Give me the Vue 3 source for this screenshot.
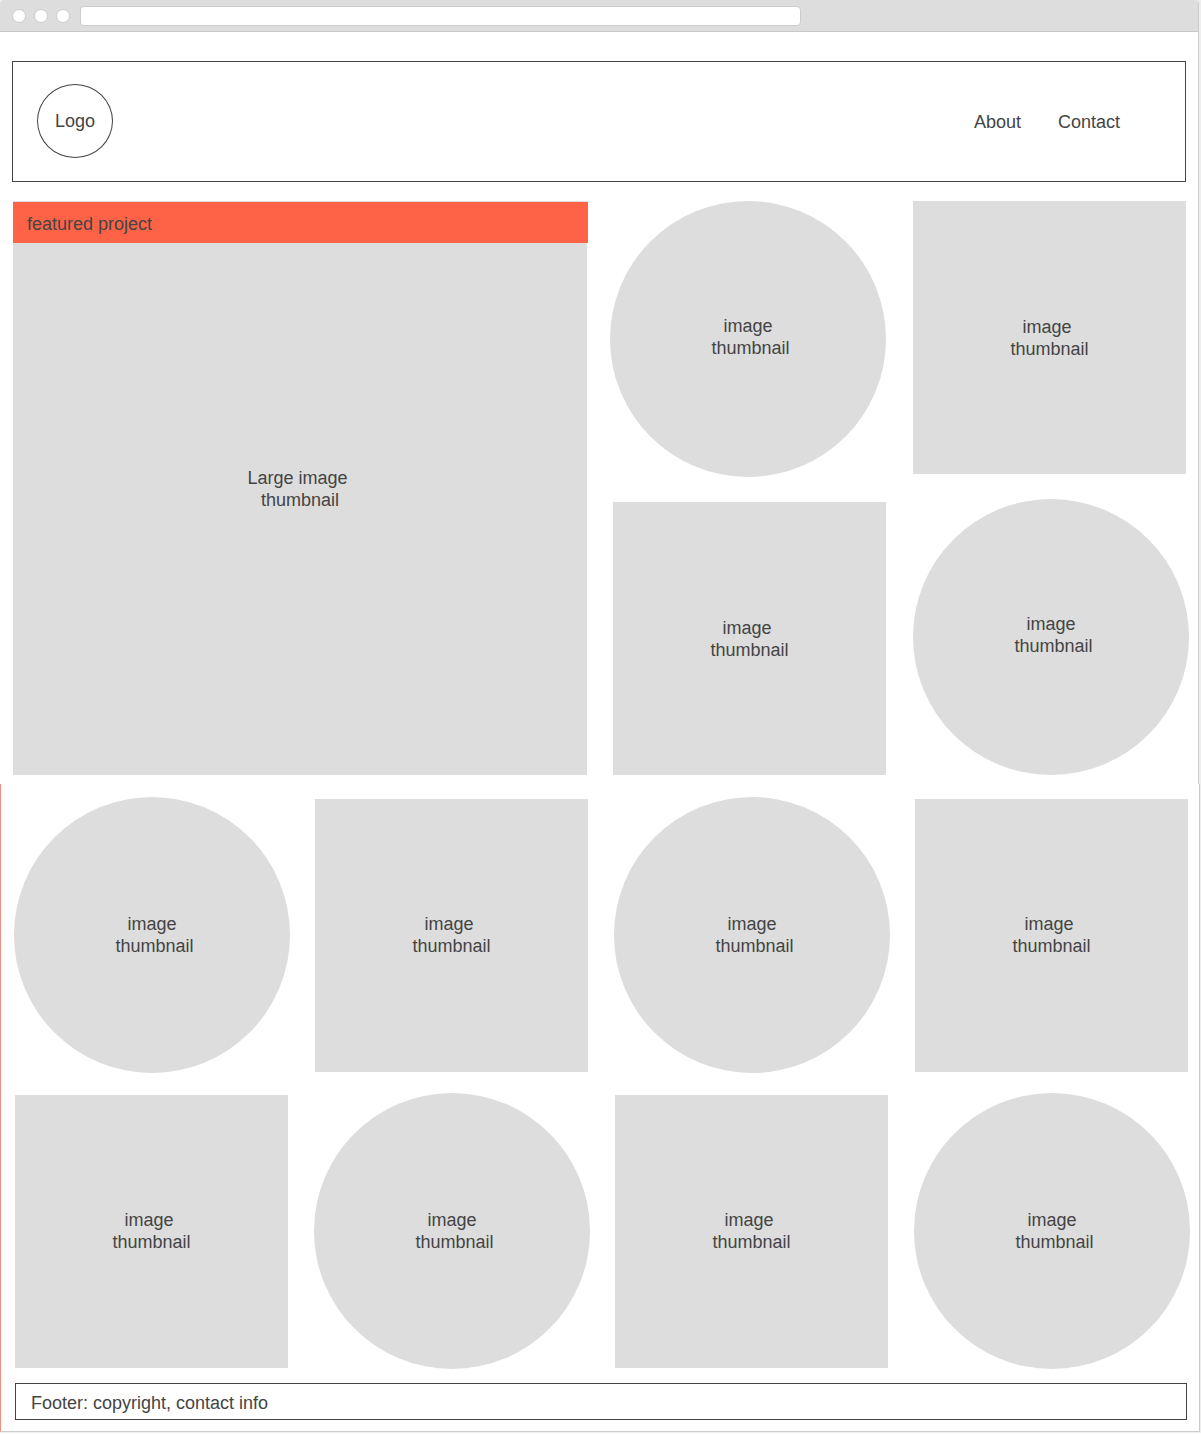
<script setup>
const topTiles = ['circle', 'square', 'square', 'circle']
const galleryTiles = [
  'circle', 'square', 'circle', 'square',
  'square', 'circle', 'square', 'circle',
]
const label = (shape) => (shape === 'circle' ? 'image\n thumbnail' : 'image \nthumbnail')
</script>

<template>
  <div class="page">
    <div class="upper">
      <div class="chrome">
        <span class="dot"></span>
        <span class="dot"></span>
        <span class="dot"></span>
        <input class="address" type="text" aria-label="Address" />
      </div>

      <header class="header">
        <a class="logo" href="#">Logo</a>
        <nav class="nav">
          <a href="#">About</a>
          <a href="#">Contact</a>
        </nav>
      </header>

      <main class="showcase">
        <section class="featured">
          <h2 class="ribbon">featured project</h2>
          <p class="caption">{{ 'Large image \nthumbnail' }}</p>
        </section>
        <div class="top-tiles">
          <div v-for="(shape, i) in topTiles" :key="i" class="tile" :class="shape">
            <p class="caption">{{ label(shape) }}</p>
          </div>
        </div>
      </main>
    </div>

    <div class="lower">
      <section class="gallery">
        <div v-for="(shape, i) in galleryTiles" :key="i" class="tile" :class="shape">
          <p class="caption">{{ label(shape) }}</p>
        </div>
      </section>
      <footer class="footer">Footer: copyright, contact info</footer>
    </div>
  </div>
</template>

<style>
body {
  margin: 0;
  background: #fff;
}
</style>

<style scoped>
.page {
  box-sizing: border-box;
  padding-bottom: 1px;
  font-family: "Liberation Sans", Arial, sans-serif;
  font-size: 18px;
  line-height: 22px;
  color: #444;
  background: #eee;
}
.page * {
  box-sizing: border-box;
}
.upper {
  margin-right: 2px;
  padding-bottom: 9px;
  border-right: 1px solid #ccc;
  border-radius: 4px 4px 0 0;
  background: #fff;
}
.chrome {
  display: flex;
  align-items: center;
  gap: 8px;
  height: 32px;
  padding-left: 12px;
  background: #ddd;
  border-bottom: 1px solid #c8c8c8;
  border-radius: 4px 4px 0 0;
}
.dot {
  flex: none;
  width: 14px;
  height: 14px;
  border: 1px solid #ccc;
  border-radius: 50%;
  background: #fff;
}
.address {
  flex: 0 1 721px;
  min-width: 0;
  height: 20px;
  margin: 0 12px 0 2px;
  padding: 0 6px;
  border: 1px solid #ccc;
  border-radius: 4px;
  background: #fff;
  font: inherit;
  font-size: 12px;
  outline: none;
}
.header {
  display: flex;
  align-items: flex-start;
  justify-content: space-between;
  height: 121px;
  margin: 29px 12px 0;
  padding: 22px 65px 0 24px;
  border: 1px solid #444;
}
.header a {
  color: inherit;
  text-decoration: none;
}
.logo {
  display: flex;
  align-items: center;
  justify-content: center;
  width: 76px;
  height: 74px;
  border: 1px solid #444;
  border-radius: 50%;
}
.nav {
  display: flex;
  gap: 37px;
  padding-top: 27px;
}
.showcase {
  display: grid;
  grid-template-columns: 574fr 579fr;
  column-gap: 23px;
  margin: 19px 9px 0 13px;
}
.featured {
  position: relative;
  display: flex;
  align-items: center;
  justify-content: center;
  aspect-ratio: 1;
  padding-top: 2px;
  background: #ddd;
}
.ribbon {
  position: absolute;
  top: 1px;
  left: 0;
  right: -1px;
  height: 41px;
  margin: 0;
  padding: 11px 14px 0;
  background: #ff6347;
  font-size: 18px;
  font-weight: 400;
  line-height: 22px;
}
.top-tiles {
  display: grid;
  grid-template-columns: 1fr 1fr;
  column-gap: 27px;
  align-content: space-between;
}
.tile {
  display: flex;
  align-items: center;
  justify-content: center;
  aspect-ratio: 1;
  background: #ddd;
}
.circle {
  border-radius: 50%;
}
.top-tiles .circle {
  padding-bottom: 4px;
}
.square {
  width: calc(100% - 3px);
}
.top-tiles .square:nth-child(3) {
  place-self: end;
}
.caption {
  margin: 0;
  text-align: center;
  white-space: pre;
}
.lower {
  margin-right: 1px;
  padding: 13px 9px 11px 13px;
  border: solid #ccc;
  border-width: 0 1px 1px 0;
  border-left: 1px solid #ee9080;
  background: #fff;
}
.gallery {
  display: grid;
  grid-template-columns: repeat(4, 1fr);
  gap: 20px 24px;
}
.gallery .square {
  align-self: center;
  margin-left: 1px;
}
.footer {
  height: 37px;
  margin: 14px 3px 0 1px;
  padding: 8px 15px 0;
  border: 1px solid #444;
}
</style>
